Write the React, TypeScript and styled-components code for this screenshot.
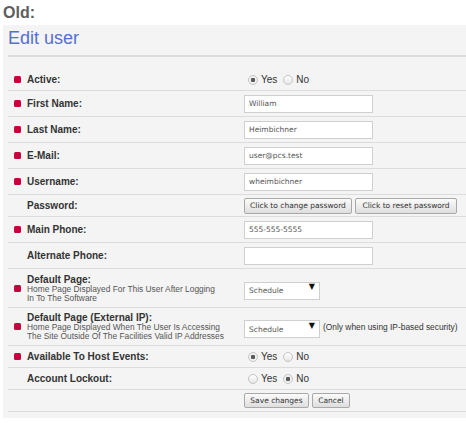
import styled, { createGlobalStyle } from "styled-components";

const GlobalStyle = createGlobalStyle`
  body {
    margin: 0;
    background: #fff;
    font-family: "Liberation Sans", Arial, sans-serif;
  }
`;

const Heading = styled.div`
  padding: 4px 0 0 3px;
  height: 21px;
  font-size: 16px;
  line-height: 18px;
  font-weight: bold;
  color: #5e5e5e;
`;

const Panel = styled.div`
  margin-left: 3px;
  background: #f4f4f4;
  padding: 2px 0 6px 5px;
`;

const Title = styled.h1`
  margin: 0;
  font-size: 18px;
  line-height: 22px;
  font-weight: normal;
  color: #5470d4;
  padding-bottom: 6px;
  border-bottom: 2px solid #dcdcdc;
`;

const Form = styled.form`
  margin-top: 12px;
`;

const Row = styled.div<{ $h: number }>`
  display: grid;
  grid-template-columns: 19px 216px 1fr;
  align-items: center;
  height: ${(p) => p.$h}px;
  box-sizing: border-box;
  border-bottom: 1px solid #dcdcdc;
`;

const Bullet = styled.span`
  display: block;
  width: 7px;
  height: 7px;
  margin-left: 6px;
  border-radius: 1.5px;
  background: #c8003c;
`;

const Label = styled.div`
  font-size: 10px;
  line-height: 11px;
  font-weight: bold;
  color: #333;
`;

const Hint = styled.div`
  font-size: 8.4px;
  line-height: 9px;
  font-weight: normal;
  color: #555;
`;

const Control = styled.div`
  display: flex;
  align-items: center;
  padding-left: 1px;
`;

const TextInput = styled.input`
  width: 129px;
  height: 18px;
  box-sizing: border-box;
  border: 1px solid #cfcfcf;
  background: #fff;
  padding: 0 4px;
  font-family: "DejaVu Sans", Verdana, sans-serif;
  font-size: 7.5px;
  color: #555;
  outline: none;
`;

const SelectWrap = styled.div`
  position: relative;
  width: 76px;
  height: 18px;
`;

const Select = styled.select`
  appearance: none;
  width: 100%;
  height: 100%;
  box-sizing: border-box;
  border: 1px solid #cfcfcf;
  background: #fff;
  padding: 0 4px;
  font-family: "DejaVu Sans", Verdana, sans-serif;
  font-size: 7.5px;
  color: #555;
  outline: none;
`;

const Arrow = styled.span`
  position: absolute;
  right: 5px;
  top: 3px;
  font-size: 8px;
  line-height: 10px;
  color: #111;
  pointer-events: none;
  font-family: "DejaVu Sans", sans-serif;
`;

const Note = styled.span`
  margin-left: 3px;
  font-size: 8.4px;
  color: #333;
`;

const RadioLabel = styled.label<{ $first?: boolean }>`
  display: inline-flex;
  align-items: center;
  font-size: 10px;
  color: #333;
  margin-right: 6px;
  margin-left: ${(p) => (p.$first ? 4 : 0)}px;
`;

const Radio = styled.input.attrs({ type: "radio" })`
  appearance: none;
  width: 10px;
  height: 10px;
  margin: 0 3px 0 0;
  border-radius: 50%;
  border: 1px solid #c4c4c4;
  background: linear-gradient(#ffffff, #e6e6e6);
  box-sizing: border-box;

  &:checked {
    background: radial-gradient(circle, #5a5a5a 0 2px, #eee 2.5px, #fafafa 100%);
  }
`;

const Button = styled.button<{ $w: number; $h?: number }>`
  width: ${(p) => p.$w}px;
  height: ${(p) => p.$h ?? 16}px;
  margin-right: 3px;
  padding: 0;
  border: 1px solid #a9a9a9;
  border-radius: 2px;
  background: linear-gradient(#fbfbfb, #dedede);
  font-family: "DejaVu Sans", Verdana, sans-serif;
  font-size: 7.5px;
  color: #333;
`;

type FieldProps = {
  h?: number;
  required?: boolean;
  label: string;
  hint?: string[];
  children?: React.ReactNode;
};

function Field({ h = 26, required, label, hint, children }: FieldProps) {
  return (
    <Row $h={h}>
      <div>{required && <Bullet />}</div>
      <Label>
        {label}
        {hint && hint.map((line) => <Hint key={line}>{line}</Hint>)}
      </Label>
      <Control>{children}</Control>
    </Row>
  );
}

function YesNo({ name, yes }: { name: string; yes: boolean }) {
  return (
    <>
      <RadioLabel $first>
        <Radio name={name} defaultChecked={yes} />
        Yes
      </RadioLabel>
      <RadioLabel>
        <Radio name={name} defaultChecked={!yes} />
        No
      </RadioLabel>
    </>
  );
}

function PageSelect() {
  return (
    <SelectWrap>
      <Select defaultValue="schedule">
        <option value="schedule">Schedule</option>
      </Select>
      <Arrow>▼</Arrow>
    </SelectWrap>
  );
}

export default function App() {
  return (
    <>
      <GlobalStyle />
      <Heading>Old:</Heading>
      <Panel>
        <Title>Edit user</Title>
        <Form onSubmit={(e) => e.preventDefault()}>
          <Field h={22} required label="Active:">
            <YesNo name="active" yes />
          </Field>
          <Field required label="First Name:">
            <TextInput defaultValue="William" />
          </Field>
          <Field required label="Last Name:">
            <TextInput defaultValue="Heimbichner" />
          </Field>
          <Field required label="E-Mail:">
            <TextInput defaultValue="user@pcs.test" />
          </Field>
          <Field required label="Username:">
            <TextInput defaultValue="wheimbichner" />
          </Field>
          <Field h={22} label="Password:">
            <Button type="button" $w={108}>
              Click to change password
            </Button>
            <Button type="button" $w={102}>
              Click to reset password
            </Button>
          </Field>
          <Field required label="Main Phone:">
            <TextInput defaultValue="555-555-5555" />
          </Field>
          <Field label="Alternate Phone:">
            <TextInput defaultValue="" />
          </Field>
          <Field
            h={39}
            required
            label="Default Page:"
            hint={["Home Page Displayed For This User After Logging", "In To The Software"]}
          >
            <PageSelect />
          </Field>
          <Field
            h={38}
            required
            label="Default Page (External IP):"
            hint={[
              "Home Page Displayed When The User Is Accessing",
              "The Site Outside Of The Facilities Valid IP Addresses",
            ]}
          >
            <PageSelect />
            <Note>(Only when using IP-based security)</Note>
          </Field>
          <Field h={22} required label="Available To Host Events:">
            <YesNo name="host" yes />
          </Field>
          <Field h={22} label="Account Lockout:">
            <YesNo name="lockout" yes={false} />
          </Field>
          <Field h={22} label="">
            <Button type="submit" $w={65} $h={15}>
              Save changes
            </Button>
            <Button type="button" $w={38} $h={15}>
              Cancel
            </Button>
          </Field>
        </Form>
      </Panel>
    </>
  );
}
